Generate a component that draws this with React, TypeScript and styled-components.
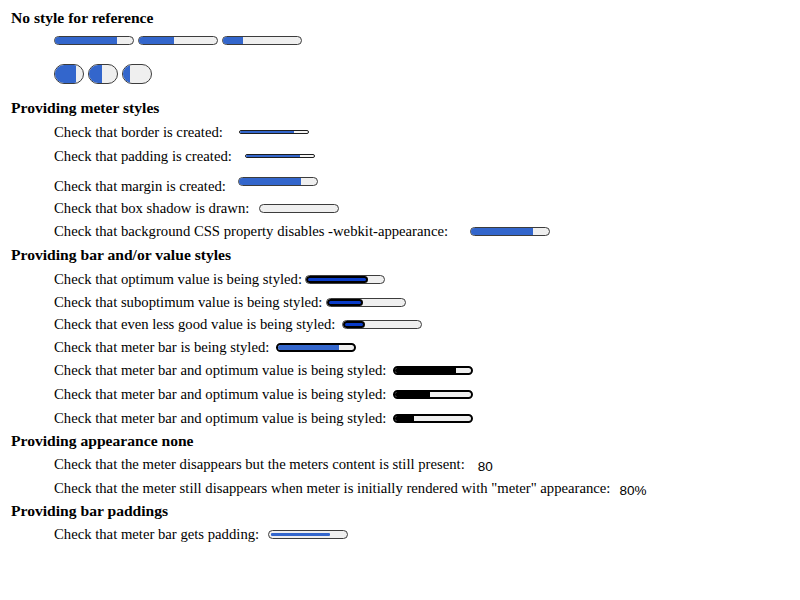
import React from "react";
import styled, { createGlobalStyle } from "styled-components";

const Global = createGlobalStyle`
  html, body { margin: 0; padding: 0; background: #fff; }
  body { font-family: "Liberation Serif", "Times New Roman", serif; color: #000; }
`;

const Page = styled.div`
  display: flex;
  flex-direction: column;
  padding: 8px 0 0 11px;
`;

const Heading = styled.div<{ $h: number }>`
  height: ${(p) => p.$h}px;
  display: flex;
  align-items: center;
  font-weight: bold;
  font-size: 15.6px;
`;

const Row = styled.div<{ $h: number; $pt?: number }>`
  box-sizing: border-box;
  height: ${(p) => p.$h}px;
  padding-top: ${(p) => p.$pt ?? 0}px;
  display: flex;
  align-items: center;
  padding-left: 43px;
  font-size: 14.7px;
  white-space: pre;
`;

const Group = styled.div<{ $h: number }>`
  height: ${(p) => p.$h}px;
  display: flex;
  align-items: center;
  gap: 4px;
  padding-left: 43px;
`;

const Label = styled.span`
  line-height: 1;
`;

const Value = styled.span<{ $ml: number }>`
  font-family: "Liberation Sans", Arial, sans-serif;
  font-size: 13.5px;
  margin-left: ${(p) => p.$ml}px;
  transform: translateY(2px);
`;

const Track = styled.div<{
  $w: number;
  $h: number;
  $border: string;
  $radius: number;
  $bg: string;
  $pad: number;
  $ml: number;
  $mb: number;
}>`
  box-sizing: border-box;
  flex: none;
  width: ${(p) => p.$w}px;
  height: ${(p) => p.$h}px;
  margin-left: ${(p) => p.$ml}px;
  margin-bottom: ${(p) => p.$mb}px;
  border: ${(p) => p.$border};
  border-radius: ${(p) => p.$radius}px;
  background: ${(p) => p.$bg};
  padding: ${(p) => p.$pad}px;
  display: flex;
  overflow: hidden;
`;

const Fill = styled.div<{ $color: string; $border: string; $radius: number }>`
  box-sizing: border-box;
  height: 100%;
  background: ${(p) => p.$color};
  border: ${(p) => p.$border};
  border-radius: ${(p) => p.$radius}px;
`;

type Kind =
  | "plain"
  | "round"
  | "thin"
  | "optimum"
  | "barStyled"
  | "blackBar"
  | "padded";

const BLUE = "#3366cc";
const GRAY = "#efefef";

const kinds: Record<
  Kind,
  {
    w: number;
    h: number;
    border: string;
    radius: number;
    bg: string;
    pad: number;
    color: string;
    fillBorder: string;
    fillRadius: number;
  }
> = {
  plain: { w: 80, h: 9, border: "1px solid #3c3c3c", radius: 5, bg: GRAY, pad: 0, color: BLUE, fillBorder: "none", fillRadius: 0 },
  round: { w: 30, h: 20, border: "1px solid #3c3c3c", radius: 10, bg: GRAY, pad: 0, color: BLUE, fillBorder: "none", fillRadius: 0 },
  thin: { w: 70, h: 4, border: "1px solid #1e1e1e", radius: 2, bg: "#f4f4f4", pad: 0, color: BLUE, fillBorder: "none", fillRadius: 0 },
  optimum: { w: 80, h: 9, border: "1px solid #3c3c3c", radius: 5, bg: GRAY, pad: 0, color: "#0a3cc8", fillBorder: "2px solid #000", fillRadius: 4 },
  barStyled: { w: 80, h: 9, border: "2px solid #000", radius: 5, bg: GRAY, pad: 0, color: BLUE, fillBorder: "none", fillRadius: 0 },
  blackBar: { w: 80, h: 9, border: "2px solid #000", radius: 5, bg: GRAY, pad: 0, color: "#000", fillBorder: "none", fillRadius: 0 },
  padded: { w: 80, h: 9, border: "1px solid #3c3c3c", radius: 5, bg: GRAY, pad: 2, color: BLUE, fillBorder: "none", fillRadius: 1 },
};

function Meter({ kind, value, ml = 0, mb = 0 }: { kind: Kind; value: number; ml?: number; mb?: number }) {
  const k = kinds[kind];
  return (
    <Track $w={k.w} $h={k.h} $border={k.border} $radius={k.radius} $bg={k.bg} $pad={k.pad} $ml={ml} $mb={mb}>
      <Fill style={{ width: `${value * 100}%` }} $color={k.color} $border={k.fillBorder} $radius={k.fillRadius} />
    </Track>
  );
}

export default function App() {
  return (
    <>
      <Global />
      <Page>
        <Heading $h={20}>No style for reference</Heading>
        <Group $h={25}>
          <Meter kind="plain" value={0.8} />
          <Meter kind="plain" value={0.45} />
          <Meter kind="plain" value={0.25} />
        </Group>
        <Group $h={42}>
          <Meter kind="round" value={0.75} />
          <Meter kind="round" value={0.45} />
          <Meter kind="round" value={0.25} />
        </Group>

        <Heading $h={26}>Providing meter styles</Heading>
        <Row $h={22}>
          <Label>Check that border is created:</Label>
          <Meter kind="thin" value={0.8} ml={16} />
        </Row>
        <Row $h={26}>
          <Label>Check that padding is created:</Label>
          <Meter kind="thin" value={0.8} ml={13} />
        </Row>
        <Row $h={28} $pt={6}>
          <Label>Check that margin is created:</Label>
          <Meter kind="plain" value={0.8} ml={12} mb={9} />
        </Row>
        <Row $h={23}>
          <Label>Check that box shadow is drawn:</Label>
          <Meter kind="plain" value={0} ml={10} />
        </Row>
        <Row $h={23}>
          <Label>Check that background CSS property disables -webkit-appearance:</Label>
          <Meter kind="plain" value={0.8} ml={22} />
        </Row>

        <Heading $h={24}>Providing bar and/or value styles</Heading>
        <Row $h={24}>
          <Label>Check that optimum value is being styled:</Label>
          <Meter kind="optimum" value={0.8} ml={3} />
        </Row>
        <Row $h={22}>
          <Label>Check that suboptimum value is being styled:</Label>
          <Meter kind="optimum" value={0.45} ml={4} />
        </Row>
        <Row $h={23}>
          <Label>Check that even less good value is being styled:</Label>
          <Meter kind="optimum" value={0.27} ml={7} />
        </Row>
        <Row $h={23}>
          <Label>Check that meter bar is being styled:</Label>
          <Meter kind="barStyled" value={0.8} ml={7} />
        </Row>
        <Row $h={23}>
          <Label>Check that meter bar and optimum value is being styled:</Label>
          <Meter kind="blackBar" value={0.8} ml={7} />
        </Row>
        <Row $h={24}>
          <Label>Check that meter bar and optimum value is being styled:</Label>
          <Meter kind="blackBar" value={0.45} ml={7} />
        </Row>
        <Row $h={24}>
          <Label>Check that meter bar and optimum value is being styled:</Label>
          <Meter kind="blackBar" value={0.25} ml={7} />
        </Row>

        <Heading $h={22}>Providing appearance none</Heading>
        <Row $h={25}>
          <Label>Check that the meter disappears but the meters content is still present:</Label>
          <Value $ml={13}>80</Value>
        </Row>
        <Row $h={23}>
          <Label>Check that the meter still disappears when meter is initially rendered with "meter" appearance:</Label>
          <Value $ml={9}>80%</Value>
        </Row>

        <Heading $h={22}>Providing bar paddings</Heading>
        <Row $h={24}>
          <Label>Check that meter bar gets padding:</Label>
          <Meter kind="padded" value={0.8} ml={9} />
        </Row>
      </Page>
    </>
  );
}
